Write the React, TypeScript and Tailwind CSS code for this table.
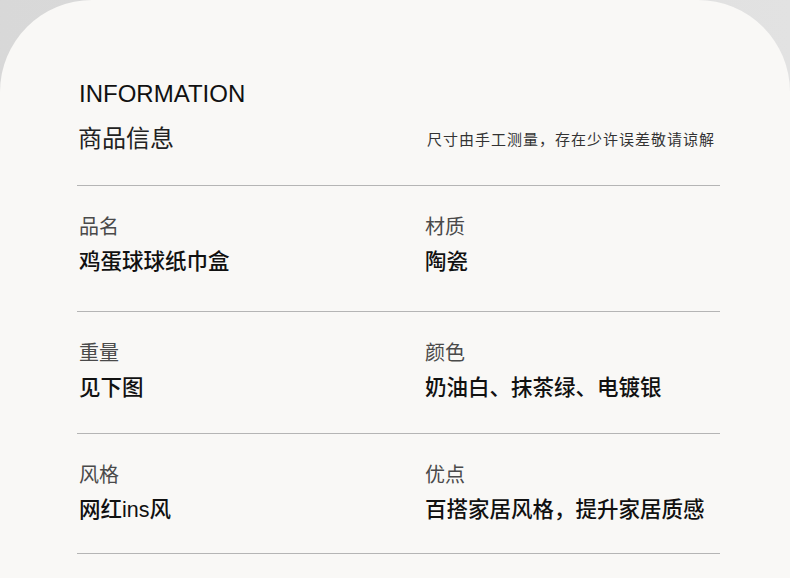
const FONT = { fontFamily: '"Liberation Sans", "Noto Sans CJK SC", sans-serif' };

type Spec = { label: string; value: string };

const rows: { left: Spec; right: Spec; pb: string }[] = [
  { left: { label: '品名', value: '鸡蛋球球纸巾盒' }, right: { label: '材质', value: '陶瓷' }, pb: 'pb-[37px]' },
  { left: { label: '重量', value: '见下图' }, right: { label: '颜色', value: '奶油白、抹茶绿、电镀银' }, pb: 'pb-[34px]' },
  { left: { label: '风格', value: '网红ins风' }, right: { label: '优点', value: '百搭家居风格，提升家居质感' }, pb: 'pb-[31px]' },
];

const Cell = ({ label, value }: Spec) => (
  <div className="flex flex-col">
    <span className="text-[20px] leading-[20px] text-[#4a4a4a]">{label}</span>
    <span className="mt-[15px] text-[21.5px] leading-[21.5px] font-medium text-[#111111]">{value}</span>
  </div>
);

export default function App() {
  return (
    <div className="w-[790px] h-[578px] overflow-hidden bg-gradient-to-r from-[#d8d8d8] to-[#e2e2e2]" style={FONT}>
      <div className="h-full rounded-t-[92px] bg-[#f9f8f6] pt-[82px]">
        <div className="ml-[77px] w-[643px]">
          <div className="pl-[2px] text-[24px] leading-[24px] text-[#111111]">INFORMATION</div>
          <div className="mt-[21px] flex items-end justify-between pl-[1px]">
            <span className="text-[24px] leading-[24px] text-[#222222]">商品信息</span>
            <span className="mb-[4px] mr-[5px] text-[15px] leading-[15px] tracking-[1px] text-[#333333]">尺寸由手工测量，存在少许误差敬请谅解</span>
          </div>
          <div className="mt-[34px] h-px bg-[#b5b5b5]" />
          {rows.map(row => (
            <div key={row.left.label}>
              <div className={`grid grid-cols-[346px_1fr] pl-[2px] pt-[31px] ${row.pb}`}>
                <Cell {...row.left} />
                <Cell {...row.right} />
              </div>
              <div className="h-px bg-[#b5b5b5]" />
            </div>
          ))}
        </div>
      </div>
    </div>
  );
}
